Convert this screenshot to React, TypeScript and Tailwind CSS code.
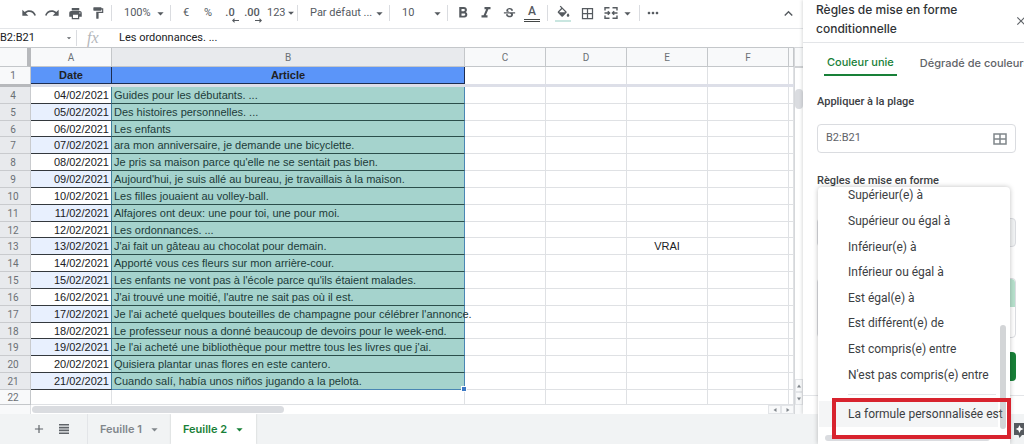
import type { ReactNode } from "react";
import {
  MdAdd,
  MdArrowDropDown,
  MdBorderAll,
  MdClose,
  MdExpandLess,
  MdFormatBold,
  MdFormatItalic,
  MdFormatPaint,
  MdMoreHoriz,
  MdPrint,
  MdRedo,
  MdStrikethroughS,
  MdUndo,
} from "react-icons/md";

const rows: [string, string][] = [
  ["04/02/2021", "Guides pour les débutants. ..."],
  ["05/02/2021", "Des histoires personnelles. ..."],
  ["06/02/2021", "Les enfants"],
  ["07/02/2021", "ara mon anniversaire, je demande une bicyclette."],
  ["08/02/2021", "Je pris sa maison parce qu'elle ne se sentait pas bien."],
  ["09/02/2021", "Aujourd'hui, je suis allé au bureau, je travaillais à la maison."],
  ["10/02/2021", "Les filles jouaient au volley-ball."],
  ["11/02/2021", "Alfajores ont deux: une pour toi, une pour moi."],
  ["12/02/2021", "Les ordonnances. ..."],
  ["13/02/2021", "J'ai fait un gâteau au chocolat pour demain."],
  ["14/02/2021", "Apporté vous ces fleurs sur mon arrière-cour."],
  ["15/02/2021", "Les enfants ne vont pas à l'école parce qu'ils étaient malades."],
  ["16/02/2021", "J'ai trouvé une moitié, l'autre ne sait pas où il est."],
  ["17/02/2021", "Je l'ai acheté quelques bouteilles de champagne pour célébrer l'annonce."],
  ["18/02/2021", "Le professeur nous a donné beaucoup de devoirs pour le week-end."],
  ["19/02/2021", "Je l'ai acheté une bibliothèque pour mettre tous les livres que j'ai."],
  ["20/02/2021", "Quisiera plantar unas flores en este cantero."],
  ["21/02/2021", "Cuando salí, había unos niños jugando a la pelota."],
];

const conditions = [
  "Supérieur(e) à",
  "Supérieur ou égal à",
  "Inférieur(e) à",
  "Inférieur ou égal à",
  "Est égal(e) à",
  "Est différent(e) de",
  "Est compris(e) entre",
  "N'est pas compris(e) entre",
];

function Tool({ label, children }: { label: string; children: ReactNode }) {
  return (
    <button aria-label={label} className="flex h-6 w-[22px] shrink-0 items-center justify-center">
      {children}
    </button>
  );
}

function Separator() {
  return <span className="h-4 w-px shrink-0 bg-[#dadce0]" />;
}

function ToolSelect({ label, value, className }: { label: string; value: string; className: string }) {
  return (
    <div className={`flex shrink-0 items-center ${className}`}>
      <select aria-label={label} className="min-w-0 flex-1 appearance-none bg-transparent">
        <option>{value}</option>
      </select>
      <MdArrowDropDown size={15} className="-ml-1 shrink-0" />
    </div>
  );
}

function MergeIcon() {
  return (
    <svg width="14" height="12" viewBox="0 0 14 12" fill="none" stroke="currentColor" strokeWidth="1.4">
      <path d="M5.500.8H1v2.700M8.500.8H13v2.700M5.500 11.200H1V8.500M8.500 11.200H13V8.500M.5 6h5M13.500 6h-5M3.800 4.200 5.600 6 3.800 7.800M10.200 4.200 8.400 6l1.800 1.800" />
    </svg>
  );
}

function Toolbar() {
  return (
    <div className="flex h-[29px] items-center border-b border-[#e3e5e8] pb-0.5 font-['Roboto',sans-serif] text-[11px] text-[#555a5f]">
      <div className="flex gap-px pl-[18px] pr-0.5">
        <Tool label="Annuler"><MdUndo size={16} /></Tool>
        <Tool label="Rétablir"><MdRedo size={16} /></Tool>
        <Tool label="Imprimer"><MdPrint size={15} /></Tool>
        <Tool label="Copier la mise en forme"><MdFormatPaint size={14} /></Tool>
      </div>
      <Separator />
      <ToolSelect label="Zoom" value="100%" className="w-[58px] pl-3 pr-0.5" />
      <Separator />
      <div className="flex items-center pl-1">
        <Tool label="Format devise">€</Tool>
        <Tool label="Format pourcentage">%</Tool>
        <Tool label="Réduire le nombre de décimales">
          <span className="relative font-medium">
            .0
            <svg className="absolute -right-1 -bottom-0.5" width="7" height="5" viewBox="0 0 7 5" fill="currentColor"><path d="M0 2.500 2.500 0v2H7v1H2.500v2z" /></svg>
          </span>
        </Tool>
        <Tool label="Augmenter le nombre de décimales">
          <span className="relative font-medium">
            .00
            <svg className="absolute -right-0.5 -bottom-0.5" width="7" height="5" viewBox="0 0 7 5" fill="currentColor"><path d="M7 2.500 4.500 0v2H0v1h4.500v2z" /></svg>
          </span>
        </Tool>
        <button className="flex w-[34px] items-center pl-1">
          123<MdArrowDropDown size={14} className="-ml-0.5 shrink-0" />
        </button>
      </div>
      <Separator />
      <ToolSelect label="Police" value="Par défaut ..." className="w-[91px] pl-3 pr-0.5" />
      <Separator />
      <ToolSelect label="Taille de police" value="10" className="w-[57px] pl-3 pr-0.5" />
      <Separator />
      <div className="flex gap-px px-1">
        <Tool label="Gras"><MdFormatBold size={18} /></Tool>
        <Tool label="Italique"><MdFormatItalic size={18} /></Tool>
        <Tool label="Barré"><MdStrikethroughS size={15} /></Tool>
        <Tool label="Couleur du texte">
          <span className="flex w-4 flex-col items-center gap-0.5 text-xs leading-3 font-medium">
            A<span className="h-[3px] w-4 border-y border-[#444746]" />
          </span>
        </Tool>
      </div>
      <Separator />
      <div className="flex items-center gap-0.5 pl-1 pr-1">
        <Tool label="Couleur de remplissage">
          <span className="flex flex-col items-center">
            <svg width="13" height="13" viewBox="2 0 20 18" fill="currentColor">
              <path d="M16.560 8.940 7.620 0 6.210 1.410l2.380 2.380-5.150 5.150c-.59.590-.59 1.540 0 2.120l5.500 5.500c.29.290.68.440 1.060.440s.77-.15 1.060-.44l5.500-5.500c.59-.58.59-1.530 0-2.120zM5.210 10 10 5.210 14.790 10zM19 11.500s-2 2.170-2 3.500c0 1.100.9 2 2 2s2-.9 2-2c0-1.330-2-3.500-2-3.500z" />
            </svg>
            <span className="mt-0.5 h-0.5 w-4 bg-[#c9e6e0]" />
          </span>
        </Tool>
        <Tool label="Bordures"><MdBorderAll size={15} /></Tool>
        <Tool label="Fusionner les cellules"><MergeIcon /></Tool>
        <MdArrowDropDown size={15} className="-ml-1" />
      </div>
      <Separator />
      <div className="flex flex-1 items-center justify-between pl-0.5 pr-1">
        <Tool label="Plus"><MdMoreHoriz size={16} /></Tool>
        <Tool label="Masquer les menus"><MdExpandLess size={17} /></Tool>
      </div>
    </div>
  );
}

function FormulaBar() {
  return (
    <div className="flex h-[18px] items-center font-['Roboto',sans-serif] text-[11px] text-[#202124]">
      <input aria-label="Zone de nom" defaultValue="B2:B21" className="w-16 outline-none" />
      <MdArrowDropDown size={10} className="text-[#5f6368]" />
      <span className="ml-0.5 h-4 w-px bg-[#dadce0]" />
      <span className="w-[42px] pl-[10px] font-['Liberation_Serif',serif] text-base leading-4 text-[#b4b7bb] italic">fx</span>
      <input aria-label="Formule" defaultValue="Les ordonnances. ..." className="min-w-0 flex-1 outline-none" />
    </div>
  );
}

function EmptyCells({ value = "" }: { value?: string }) {
  return (
    <>
      {["", "", value, "", ""].map((text, i) => (
        <td key={i} className="border-r border-b border-[#dfe1e4] pt-px text-center">{text}</td>
      ))}
    </>
  );
}

function Sheet() {
  return (
    <table className="h-[358px] w-full table-fixed border-separate border-spacing-0 border-t border-[#c4c7ca] font-['Liberation_Sans',Arial,sans-serif] text-[11px] leading-[13px] text-[#202124]">
      <colgroup>
        <col className="w-[31px]" />
        <col className="w-[81px]" />
        <col className="w-[353px]" />
        <col className="w-[81px]" />
        <col className="w-[81px]" />
        <col className="w-[81px]" />
        <col className="w-[81px]" />
        <col />
      </colgroup>
      <thead className="font-['Roboto',sans-serif] text-[10px] text-[#6b7075]">
        <tr className="h-[19px]">
          <td className="border-r-4 border-b border-r-[#b7b9bc] border-b-[#c4c7ca] bg-[#f8f9fa]" />
          {["A", "B", "C", "D", "E", "F", ""].map((name) => (
            <th
              key={name}
              scope="col"
              className={`border-r border-b border-[#c4c7ca] pt-px font-normal ${name === "B" ? "bg-[#e8eaed]" : "bg-[#f8f9fa]"}`}
            >
              {name}
            </th>
          ))}
        </tr>
      </thead>
      <tbody>
        <tr className="h-[17px]">
          <th scope="row" className="border-r border-[#c4c7ca] bg-[#f8f9fa] pr-1 font-['Roboto',sans-serif] text-[10px] font-normal text-[#6b7075]">1</th>
          <td className="border-r border-b border-[#1c2c50] bg-[#5b95f9] pt-px text-center font-bold">Date</td>
          <td className="border-r border-b border-[#1c2c50] bg-[#5b95f9] pt-px text-center font-bold">Article</td>
          {[0, 1, 2, 3, 4].map((i) => (
            <td key={i} className="border-r border-[#dfe1e4]" />
          ))}
        </tr>
        <tr className="h-[3px]">
          <td className="bg-[#b7b9bc]" />
          <td colSpan={7} className="bg-[#dddfe8]" />
        </tr>
        {rows.map(([date, text], i) => (
          <tr key={date}>
            <th scope="row" className="border-r border-b border-[#c9cbce] bg-[#e8eaed] pt-px pr-1 font-['Roboto',sans-serif] text-[10px] font-normal text-[#6b7075]">
              {i + 4}
            </th>
            <td className={`border-r border-b border-r-[#3f7f9c] border-b-[#33383d] pt-px pr-0.5 text-right ${i % 2 ? "bg-[#e8f0fe]" : "bg-white"}`}>
              {date}
            </td>
            <td
              className={`relative border-r border-b border-r-[#4a86b4] bg-[#a5d3cd] pt-px pl-0.5 whitespace-nowrap text-[#1c3b39] ${i === rows.length - 1 ? "border-b-[#4a86b4]" : "border-b-[#2b4e4b]"}`}
            >
              {text}
              {i === rows.length - 1 && (
                <span className="absolute -right-[3px] -bottom-[3px] size-[6px] border border-white bg-[#3b78c4]" />
              )}
            </td>
            <EmptyCells value={date === "13/02/2021" ? "VRAI" : ""} />
          </tr>
        ))}
        <tr className="h-[15px] leading-3">
          <th scope="row" className="border-r border-b border-[#c4c7ca] bg-[#f8f9fa] pt-0.5 pr-1 font-['Roboto',sans-serif] text-[10px] font-normal text-[#6b7075]">22</th>
          <td className="border-r border-b border-[#dfe1e4]" />
          <td className="border-r border-b border-[#dfe1e4]" />
          <EmptyCells />
        </tr>
      </tbody>
    </table>
  );
}

function ScrollArrow({ label, className }: { label: string; className: string }) {
  return (
    <button aria-label={label} className="flex items-center justify-center border border-[#e3e5e8] bg-[#f8f9fa]">
      <svg width="4" height="4" viewBox="0 0 4 4" fill="#80868b" className={className}>
        <path d="M2 .5 4 3.500H0z" />
      </svg>
    </button>
  );
}

function SheetArea() {
  return (
    <div className="flex">
      <div className="min-w-0 flex-1">
        <Sheet />
        <div className="flex h-[9px] items-center justify-between bg-white">
          <div className="flex flex-1 self-stretch">
            <span className="w-[31px] border-r border-[#dfe1e4] bg-[#f8f9fa]" />
            <span className="mt-px ml-px h-[7px] w-[252px] rounded-full bg-[#dadce0]" />
          </div>
          <div className="grid h-[9px] w-[26px] grid-cols-2">
            <ScrollArrow label="Défiler à gauche" className="-rotate-90" />
            <ScrollArrow label="Défiler à droite" className="rotate-90" />
          </div>
        </div>
      </div>
      <div className="flex w-[9px] flex-col border-t border-l border-[#d5d7da] bg-[#f8f9fa]">
        <div className="h-[20px] border-b-2 border-[#d0d2d5]" />
        <div className="flex-1 bg-white pt-[21px]">
          <div className="h-5 rounded-full bg-[#dadce0]" />
        </div>
        <div className="grid h-[26px] grid-rows-2">
          <ScrollArrow label="Défiler vers le haut" className="" />
          <ScrollArrow label="Défiler vers le bas" className="rotate-180" />
        </div>
        <div className="h-[9px]" />
      </div>
    </div>
  );
}

function ConditionMenu() {
  return (
    <div className="absolute top-0 left-px z-10 flex h-[257px] w-[192px] flex-col justify-end rounded-t-sm bg-white shadow-[0_0_5px_rgba(0,0,0,0.25)] [clip-path:inset(-6px_-6px_0_-6px)]">
      <div className="flex flex-1 flex-col justify-end overflow-hidden">
        <ul className="grid h-[205px] shrink-0 auto-rows-fr">
          {conditions.map((name) => (
            <li key={name} className="grid">
              <button className="pt-px pl-[30px] text-left whitespace-nowrap">{name}</button>
            </li>
          ))}
        </ul>
        <hr className="mt-[7px] mr-[14px] mb-[6px] ml-[30px] border-[#e3e5e8]" />
        <button className="mr-3 ml-px h-[26px] shrink-0 bg-[#f4f5f6] pl-[29px] text-left whitespace-nowrap">
          La formule personnalisée est
        </button>
        <div className="mt-2 mb-[3px] ml-[7px] h-[6px] w-[165px] shrink-0 rounded-full bg-[#dadce0]" />
      </div>
      <span className="absolute top-[138px] right-1 h-[104px] w-[6px] rounded-full bg-[#80868b]/35" />
      <span className="pointer-events-none absolute top-[211px] left-[14px] h-[41px] w-[179px] border-4 border-[#d8232e]" />
    </div>
  );
}

function RulesPanel() {
  return (
    <aside className="w-[221px] shrink-0 bg-white font-['Roboto',sans-serif] text-xs text-[#3c4043] shadow-[-1px_0_3px_rgba(60,64,67,0.18)]">
      <div className="flex h-[43px] items-center justify-between overflow-hidden border-b border-[#e3e5e8] pl-[13px]">
        <h2 className="w-[170px] pb-1 font-['Inter',sans-serif] text-xs leading-[19px] font-medium text-[#303336]">
          Règles de mise en forme conditionnelle
        </h2>
        <button aria-label="Fermer" className="-mr-1 shrink-0 text-[#5f6368]"><MdClose size={14} /></button>
      </div>
      <div className="flex gap-[23px] overflow-hidden pt-2 pl-[21px] font-['Inter',sans-serif] text-[11px] font-medium whitespace-nowrap">
        <button className="h-[25px] shrink-0 border-b-2 border-[#188038] px-[3px] text-[#188038]">Couleur unie</button>
        <button className="h-[25px] shrink-0 text-[#5f6368]">Dégradé de couleurs</button>
      </div>
      <div className="pt-[18px] pr-2 pl-[14px]">
        <label htmlFor="range" className="block text-[11px] leading-4 font-medium">Appliquer à la plage</label>
        <div className="mt-[14px] flex h-[29px] items-center justify-between rounded-sm border border-[#dadce0] px-2 text-[11px] text-[#5f6368]">
          <input id="range" defaultValue="B2:B21" className="min-w-0 flex-1 outline-none" />
          <svg width="14" height="12" viewBox="0 0 14 12" fill="none" stroke="#80868b" strokeWidth="1.5">
            <path d="M1 1h12v10H1zM7 1v10M1 6h12" />
          </svg>
        </div>
        <h3 className="mt-5 h-[14px] text-[11px] leading-4 font-medium">Règles de mise en forme</h3>
        <div className="relative pt-[31px]">
          <div className="h-[29px] rounded-sm border border-[#dadce0] bg-[#f1f3f4]" />
          <div className="mt-[31px] h-[60px] rounded-sm border border-[#dadce0]">
            <div className="h-7 rounded-t-sm bg-[#b7e1cd]" />
          </div>
          <div className="mt-[14px] flex justify-end">
            <button aria-label="OK" className="h-[29px] w-[70px] rounded-sm bg-[#188038]" />
          </div>
          <ConditionMenu />
        </div>
      </div>
      <div className="mt-[14px] border-b border-[#e3e5e8]" />
    </aside>
  );
}

function Footer() {
  return (
    <footer className="flex min-h-[30px] flex-1 items-start justify-between overflow-hidden bg-[#f1f3f4] font-['Inter',sans-serif] text-[11px] font-semibold">
      <div className="flex h-[30px]">
        <div className="flex w-[87px] items-center pl-8 text-[#5f6368]">
          <button aria-label="Ajouter une feuille"><MdAdd size={14} /></button>
          <button aria-label="Toutes les feuilles" className="ml-[13px]">
            <svg width="10" height="10" viewBox="0 0 10 10" fill="currentColor">
              <path d="M0 0h10v1.600H0zM0 2.800h10v1.600H0zM0 5.600h10v1.600H0zM0 8.400h10V10H0z" />
            </svg>
          </button>
        </div>
        <button className="flex w-[84px] items-center justify-between border-l border-[#e3e5e8] pr-[9px] pl-3 text-[#80868b]">
          Feuille 1<MdArrowDropDown size={15} />
        </button>
        <button className="flex w-[85px] items-center justify-between bg-white pr-[9px] pl-3 text-[#188038] shadow-[0_0_2px_rgba(60,64,67,0.25)]">
          Feuille 2<MdArrowDropDown size={15} />
        </button>
      </div>
      <button aria-label="Explorer" className="-mr-[3px] pt-2">
        <svg width="15" height="17" viewBox="0 0 15 17">
          <path d="M2 1h12v12h-4l-2.500 3-1-3H2z" fill="#55595e" />
          <path d="m7.500 3 1.200 2.800L11.500 7 8.700 8.200 7.500 11 6.300 8.200 3.500 7l2.800-1.200z" fill="#fff" />
        </svg>
      </button>
    </footer>
  );
}

export default function App() {
  return (
    <div className="flex min-h-screen flex-col overflow-hidden bg-white">
      <div className="flex">
        <main className="min-w-0 flex-1">
          <Toolbar />
          <FormulaBar />
          <SheetArea />
        </main>
        <RulesPanel />
      </div>
      <Footer />
    </div>
  );
}
